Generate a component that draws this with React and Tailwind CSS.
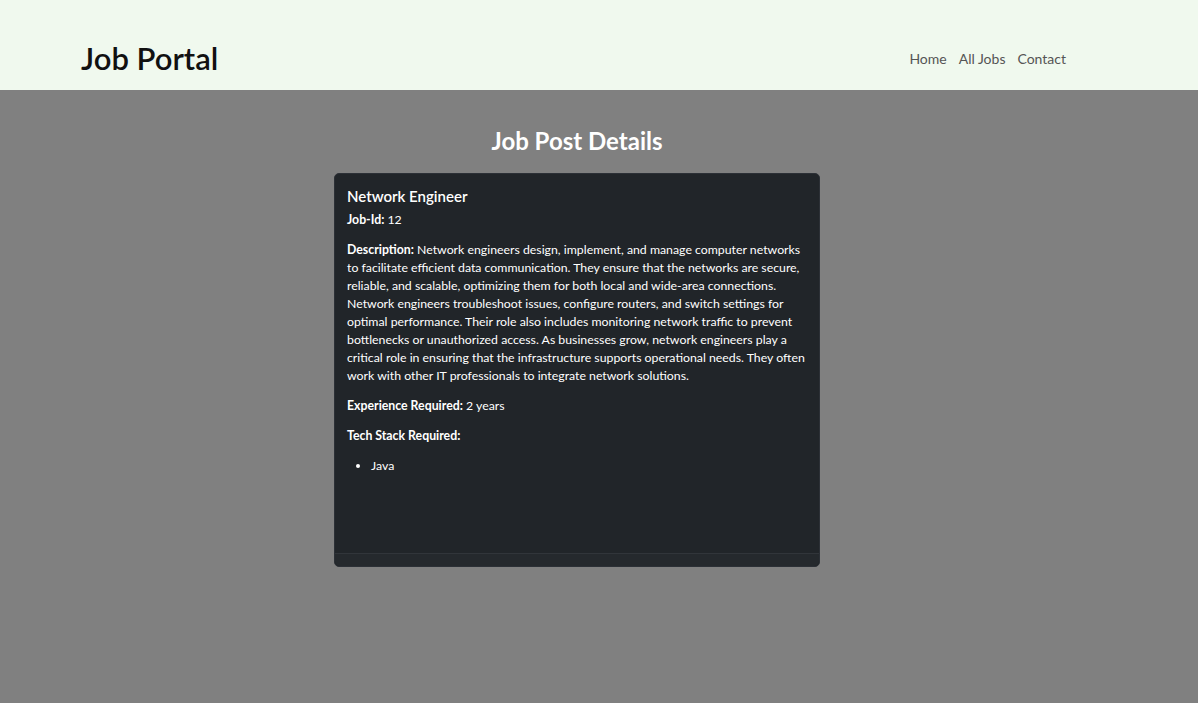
export default function App() {
  const job = {
    id: 12,
    title: "Network Engineer",
    description:
      "Network engineers design, implement, and manage computer networks to facilitate efficient data communication. They ensure that the networks are secure, reliable, and scalable, optimizing them for both local and wide-area connections. Network engineers troubleshoot issues, configure routers, and switch settings for optimal performance. Their role also includes monitoring network traffic to prevent bottlenecks or unauthorized access. As businesses grow, network engineers play a critical role in ensuring that the infrastructure supports operational needs. They often work with other IT professionals to integrate network solutions.",
    experience: 2,
    tech: ["Java"],
  };

  return (
    <div className="min-h-screen bg-[#808080] font-['Lato','Noto_Sans',sans-serif]">
      <header className="h-[90px] bg-[#f0f9ee] flex items-start justify-between pl-[81px] pr-[132px]">
        <a className="mt-[40px] text-[31px] leading-[37px] font-semibold text-[#111]">Job Portal</a>
        <nav className="mt-[49px] flex gap-[12px] text-[14px] leading-[20px] text-[#555]">
          <a>Home</a>
          <a>All Jobs</a>
          <a>Contact</a>
        </nav>
      </header>

      <main className="flex flex-col items-center pr-[44px]">
        <h2 className="mt-[36px] text-[24px] font-bold text-white leading-[30px]">Job Post Details</h2>
        <div className="mt-[17px] w-[486px] bg-[#212529] border border-[#2c3036] rounded-[5px] text-white text-[12.3px] leading-[18px] flex flex-col">
          <div className="h-[379px] px-[12px] pt-[12px]">
            <h5 className="text-[15px] font-semibold leading-[20px] mb-[5px]">{job.title}</h5>
            <p className="mb-[12px]">
              <b>Job-Id:</b> {job.id}
            </p>
            <p className="mb-[12px]">
              <b>Description:</b> {job.description}
            </p>
            <p className="mb-[12px]">
              <b>Experience Required:</b> {job.experience} years
            </p>
            <p className="mb-[12px]">
              <b>Tech Stack Required:</b>
            </p>
            <ul className="list-disc pl-[24px]">
              {job.tech.map((t) => (
                <li key={t}>{t}</li>
              ))}
            </ul>
          </div>
          <div className="h-[13px] border-t border-[#31353a] bg-[#25292d] rounded-b-[5px]"></div>
        </div>
      </main>
    </div>
  );
}
